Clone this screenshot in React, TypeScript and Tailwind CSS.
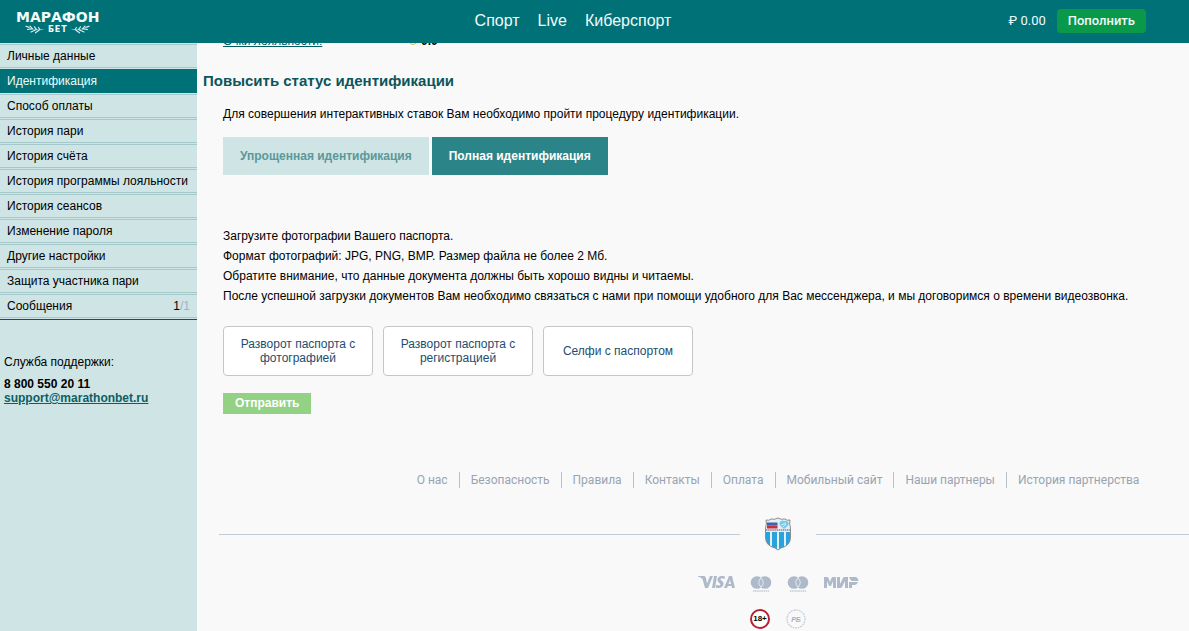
import React from "react";

type MenuItem = { label: string; active?: boolean; last?: boolean };

const menu: MenuItem[] = [
  { label: "Личные данные" },
  { label: "Идентификация", active: true },
  { label: "Способ оплаты" },
  { label: "История пари" },
  { label: "История счёта" },
  { label: "История программы лояльности" },
  { label: "История сеансов" },
  { label: "Изменение пароля" },
  { label: "Другие настройки" },
  { label: "Защита участника пари" },
  { label: "Сообщения", last: true },
];

const footerLinks = [
  "О нас",
  "Безопасность",
  "Правила",
  "Контакты",
  "Оплата",
  "Мобильный сайт",
  "Наши партнеры",
  "История партнерства",
];

const documents = ["Разворот паспорта с фотографией", "Разворот паспорта с регистрацией", "Селфи с паспортом"];

function Laurel({ className }: { className?: string }) {
  return (
    <svg viewBox="0 0 19 9" className={"h-[9px] w-[19px] " + (className ?? "")} fill="none" stroke="#d5ecec" strokeLinecap="round" aria-hidden="true">
      <path d="M1 1.500C5 3 8 5.500 18 4.500" strokeWidth="0.5" />
      <path d="M1 1.200L4 2.300M5 1.200L7.500 3.800M9.500 1.800L11.500 4.500M13.500 2.500L15 4.500M2.500 4.500L6.500 3.800M6 7L10.500 5M10.500 7.800L14 5.200" strokeWidth="1.200" />
    </svg>
  );
}

function Logo() {
  return (
    <a href="#" className="flex flex-col items-center gap-px pt-0.5 font-['DejaVu_Sans',sans-serif] font-bold text-[#f2fcfc]">
      <span className="text-sm leading-[14px]">МАРАФОН</span>
      <span className="flex items-center gap-1">
        <Laurel />
        <span className="text-[8px] leading-[10px] tracking-widest">БЕТ</span>
        <Laurel className="-scale-x-100" />
      </span>
    </a>
  );
}

function Shield() {
  return (
    <svg viewBox="0 0 28 34" className="h-[34px] w-7" role="img" aria-label="Футбольный клуб">
      <clipPath id="shield">
        <path d="M2 3Q5 4 7 2Q11 3 14 1Q17 3 21 2Q23 4 26 3Q25 7 26.5 11V21Q26 27 21 29.5Q16 31 14 33Q12 31 7 29.5Q2 27 1.500 21V11Q3 7 2 3Z" />
      </clipPath>
      <g clipPath="url(#shield)">
        <path fill="#e3eff5" d="M0 0h28v34H0z" />
        <path fill="#3d63ae" d="M3 5.500h10.500v3H3z" />
        <path fill="#c9303d" d="M3 8.500h10.500v3H3z" />
        <path d="M15 6.500q2-4 5-2.500q4-1 5 2.500l-2 3-3 2.500-3-2.500z" fill="#7cc7e6" />
        <path d="M17 8l5-2M19 10l3-3" stroke="#edf8fc" strokeWidth="0.8" />
        <path d="M2 13h24" stroke="#9a7f8c" strokeWidth="1.600" strokeDasharray="1.500 .6" />
        <path fill="#2aa3da" d="M2 15h4v18H2zM8 15h5v18H8zM15 15h5v18h-5zM22 15h4v18h-4z" />
      </g>
      <path
        d="M2 3Q5 4 7 2Q11 3 14 1Q17 3 21 2Q23 4 26 3Q25 7 26.5 11V21Q26 27 21 29.5Q16 31 14 33Q12 31 7 29.5Q2 27 1.500 21V11Q3 7 2 3Z"
        fill="none"
        stroke="#8d8f92"
        strokeWidth="1"
      />
    </svg>
  );
}

function Circles({ name }: { name: string }) {
  return (
    <svg viewBox="0 0 22 17" className="h-[17px] w-[22px]" role="img" aria-label={name}>
      <circle cx="7" cy="6.500" r="6.300" fill="#aeb9ca" />
      <circle cx="15" cy="6.500" r="6.300" fill="#aeb9ca" />
      <path d="M11 1.800Q6.500 6.500 11 11.200Q15.500 6.500 11 1.800" fill="#aeb9ca" stroke="#f5f7f9" strokeWidth="0.8" />
      <path d="M3 15h16" stroke="#c2cad6" strokeWidth="1.500" strokeDasharray="1.500 .6" />
    </svg>
  );
}

function Visa() {
  return (
    <svg viewBox="0 0 37 12" className="h-3 w-[37px]" fill="#aeb9ca" role="img" aria-label="Visa">
      <path d="M0 0H6Q7.500 0 7.800 1.500L9 7.500L12 0H15L10 12H7L4.500 3Q3 1 0 .5ZM16 0H19L17 12H14Z" />
      <path d="M27 .5L26.500 3Q22.500 1.500 22.500 3.200C22.500 4.500 26 5 25.500 8.200C25 12 20.500 12.500 17.800 11.400L18.300 8.800Q22.200 10.500 22.500 8.500C22.500 7 19.200 6.500 19.500 3.600C20 0 24 -.7 27 .5ZM31 0H34L37 12H34L33.700 10H29.800L29 12H26ZM32 4L30.500 8H33Z" />
    </svg>
  );
}

function Mir() {
  return (
    <svg viewBox="0 0 35 12" className="h-3 w-[35px]" fill="#aeb9ca" role="img" aria-label="МИР">
      <path d="M0 12V1H3Q4 1 4.500 2L6 6L7.500 2Q8 1 9 1H12V12H9V5L7 10H5L3 5V12ZM13 1H16V8L19 2Q19.500 1 21 1H24V12H21V5L18 11Q17.500 12 16 12H13ZM25 6H34Q33 9 30 9H28V12H25ZM25 1H31Q34 1 34.500 5H28Q26 4 25 1Z" />
    </svg>
  );
}

function PartnerSeal() {
  return (
    <svg viewBox="0 0 20 20" className="size-5" role="img" aria-label="РБ">
      <circle cx="10" cy="10" r="9" fill="none" stroke="#c5ccd7" strokeWidth="1.300" strokeDasharray="1.500 1 2 .8" />
      <text x="10" y="12.500" textAnchor="middle" fontSize="7" fontWeight="700" fontStyle="italic" fill="#a5b1c3">РБ</text>
    </svg>
  );
}

export default function App() {
  return (
    <div className="flex min-h-screen flex-col overflow-hidden bg-[#f9f9f9] font-['Liberation_Sans',Arial,sans-serif] text-xs text-black">
      <header className="relative z-10 grid h-[43px] grid-cols-[1fr_auto_1fr] items-center bg-[#007177] pr-[43px] pb-px text-[#effcfc]">
        <div className="flex pl-4">
          <Logo />
        </div>
        <nav className="flex gap-[18px] text-base leading-5">
          <a href="#">Спорт</a>
          <a href="#">Live</a>
          <a href="#">Киберспорт</a>
        </nav>
        <div className="flex items-center justify-end gap-[11px] font-[Roboto,sans-serif] text-[13px]">
          <span>₽ 0.00</span>
          <button type="button" className="h-6 rounded bg-[#0a9849] px-[11px] font-medium">Пополнить</button>
        </div>
      </header>

      <div className="flex flex-1">
        <aside className="w-[197px] shrink-0 bg-[#cfe4e4] pt-px">
          <nav className="flex flex-col gap-px">
            {menu.map((item) => (
              <a
                key={item.label}
                href="#"
                className={
                  "flex h-6 items-center justify-between border-y px-[7px] " +
                  (item.active ? "border-[#007177] bg-[#007177] text-[#effcfc]" : "border-[#a5c9ca]")
                }
              >
                {item.label}
                {item.last && (
                  <span>
                    1<span className="text-[#9fb1cc]">/1</span>
                  </span>
                )}
              </a>
            ))}
          </nav>
          <div className="mt-px border-t border-[#80203f] px-1 pt-8">
            <p className="leading-5">Служба поддержки:</p>
            <p className="mt-[5px] leading-[14px] font-bold">8 800 550 20 11</p>
            <a href="mailto:support@marathonbet.ru" className="block leading-[14px] font-bold text-[#0b5f64] underline">support@marathonbet.ru</a>
          </div>
        </aside>

        <main className="min-w-0 flex-1">
          <div className="-mt-3 flex h-5 items-center pl-[26px]">
            <a href="#" className="w-[186px] text-[#005c62] underline">Очки лояльности:</a>
            <span className="mr-1 size-2 rounded-full border border-[#c8b45c]" />
            <b>0.0</b>
          </div>
          <h1 className="mt-5 pl-1.5 text-[15px] leading-5 font-bold text-[#0b555b]">Повысить статус идентификации</h1>

          <div className="pl-[26px]">
            <p className="mt-[13px] leading-5">Для совершения интерактивных ставок Вам необходимо пройти процедуру идентификации.</p>
            <div className="mt-[13px] flex gap-[3px]">
              <button type="button" className="h-[38px] bg-[#cfe4e4] px-[17px] font-bold text-[#5b9899]">Упрощенная идентификация</button>
              <button type="button" className="h-[38px] bg-[#2b8488] px-[17px] font-bold text-white">Полная идентификация</button>
            </div>
            <div className="mt-[51px] leading-5">
              <p>Загрузите фотографии Вашего паспорта.</p>
              <p>Формат фотографий: JPG, PNG, BMP. Размер файла не более 2 Мб.</p>
              <p>Обратите внимание, что данные документа должны быть хорошо видны и читаемы.</p>
              <p>После успешной загрузки документов Вам необходимо связаться с нами при помощи удобного для Вас мессенджера, и мы договоримся о времени видеозвонка.</p>
            </div>
            <div className="mt-5 flex gap-2.5">
              {documents.map((label) => (
                <button key={label} type="button" className="h-[50px] w-[150px] rounded border border-[#c4c7ca] bg-white px-3 leading-[14px] text-[#234d70]">
                  {label}
                </button>
              ))}
            </div>
            <button type="button" className="mt-[17px] block h-[21px] bg-[#93d184] px-3 pb-0.5 font-bold text-white">Отправить</button>
          </div>

          <footer className="mt-[58px] -mr-[148px] ml-[22px] text-[#98a4b3]">
            <nav className="flex justify-center divide-x divide-[#b8c0ca] font-[Roboto,sans-serif] leading-4">
              {footerLinks.map((label) => (
                <a key={label} href="#" className="px-[11px]">{label}</a>
              ))}
            </nav>
            <div className="mt-[29px] flex items-center gap-6">
              <span className="h-px flex-1 bg-[#c5cbd3]" />
              <Shield />
              <span className="h-px flex-1 bg-[#c5cbd3]" />
            </div>
            <div className="mt-[25px] flex h-[17px] justify-center gap-[15px]">
              <Visa />
              <Circles name="Mastercard" />
              <Circles name="Maestro" />
              <Mir />
            </div>
            <div className="mt-4 flex justify-center gap-4">
              <span className="flex size-5 items-center justify-center rounded-full border-2 border-[#b91f34] bg-white text-[8px] font-bold text-black">18+</span>
              <PartnerSeal />
            </div>
          </footer>
        </main>
      </div>
    </div>
  );
}
